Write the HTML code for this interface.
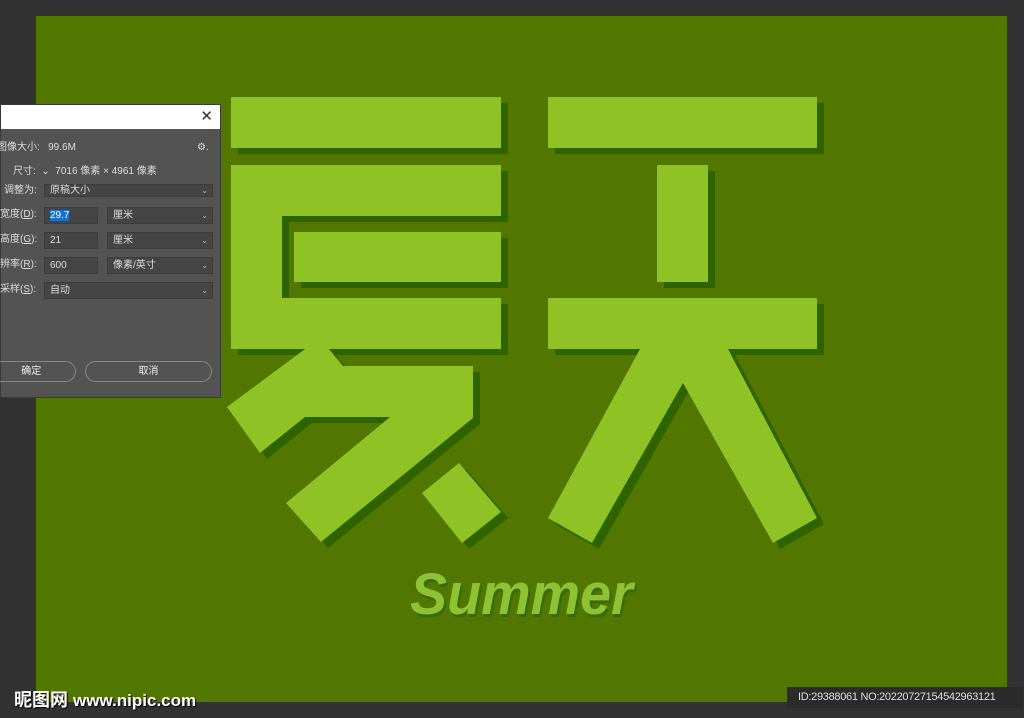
<!DOCTYPE html>
<html><head><meta charset="utf-8"><style>
*{margin:0;padding:0;box-sizing:border-box}
body{width:1024px;height:718px;background:#323232;position:relative;overflow:hidden;font-family:"Liberation Sans","Noto Sans CJK SC",sans-serif}
#canvas{position:absolute;left:36px;top:16px;width:971px;height:686px;background:#517700}
svg{position:absolute;left:0;top:0}
.summer{position:absolute;left:410px;top:566px;font:italic bold 58px/1 "Liberation Sans",sans-serif;color:#8dc232;text-shadow:2px 3px 0 #3a6a10;transform:scaleX(0.96);transform-origin:0 0;white-space:nowrap}
#dlg{position:absolute;left:0;top:104px;width:221px;height:294px;background:#535353;border:1px solid #3a3a3a;font-size:10px;color:#ddd}
#dlg .title{height:24px;background:#fff;position:relative}
#dlg .title span{position:absolute;right:7px;top:2px;color:#333;font-size:15px}
.row{position:absolute;left:0;height:18px;line-height:18px;white-space:nowrap}
.box{position:absolute;height:17px;background:#454545;border:1px solid #3c3c3c;line-height:15px;padding-left:5px;color:#ddd}
.box .ar{position:absolute;right:4px;top:0;font-size:8px;color:#bbb}
.btn{position:absolute;top:256px;height:21px;border:1px solid #888;border-radius:11px;text-align:center;line-height:19px;color:#eee}
.wm{position:absolute;left:14px;top:686px;color:#fff;font-weight:bold;font-size:18px;text-shadow:1px 1px 1px #000}
.id{position:absolute;left:787px;top:687px;width:236px;height:21px;background:#2b2b2b;color:#ddd;font-size:11px;line-height:21px;padding-left:11px;letter-spacing:-0.3px}
</style></head><body>
<div id="canvas"></div>
<svg width="1024" height="718">
<g fill="#2f6300" transform="translate(7,6)">
<rect x="231" y="97" width="270" height="51"/>
<path d="M231 165H501V216H282V298H501V349H231Z"/>
<rect x="294" y="232" width="207" height="50"/>
<polygon points="305,349 329,349 343,366 473,366 473,418 321,542 286,503 390,417 305,417 260,453 227,407"/>
<polygon points="422,493 459,463 501,512 462,543"/>
<rect x="548" y="97" width="269" height="51"/>
<rect x="657" y="165" width="51" height="117"/>
<rect x="548" y="298" width="269" height="51"/>
<polygon points="640,349 728,349 817,518 773,543 683,383 592,543 548,518"/>
</g>
<g fill="#8fc224">
<rect x="231" y="97" width="270" height="51"/>
<path d="M231 165H501V216H282V298H501V349H231Z"/>
<rect x="294" y="232" width="207" height="50"/>
<polygon points="305,349 329,349 343,366 473,366 473,418 321,542 286,503 390,417 305,417 260,453 227,407"/>
<polygon points="422,493 459,463 501,512 462,543"/>
<rect x="548" y="97" width="269" height="51"/>
<rect x="657" y="165" width="51" height="117"/>
<rect x="548" y="298" width="269" height="51"/>
<polygon points="640,349 728,349 817,518 773,543 683,383 592,543 548,518"/>
</g>
</svg>
<div class="summer">Summer</div>
<div id="dlg">
<div class="title"><span>✕</span></div>
<div class="row" style="top:34px;left:-4px">图像大小:&nbsp;&nbsp;&nbsp;99.6M</div>
<div class="row" style="top:34px;left:196px">⚙.</div>
<div class="row" style="top:58px;left:12px">尺寸:&nbsp;&nbsp;⌄&nbsp;&nbsp;7016 像素 × 4961 像素</div>
<div class="row" style="top:77px;left:3px">调整为:</div>
<div class="box" style="top:79px;left:43px;width:169px;height:13px;line-height:11px">原稿大小<span class="ar">⌄</span></div>
<div class="row" style="top:101px;left:-1px">宽度(<u>D</u>):</div>
<div class="box" style="top:102px;left:43px;width:54px"><span style="background:#1a6fc8;color:#fff">29.7</span></div>
<div class="box" style="top:102px;left:106px;width:106px">厘米<span class="ar">⌄</span></div>
<div class="row" style="top:126px;left:-1px">高度(<u>G</u>):</div>
<div class="box" style="top:127px;left:43px;width:54px">21</div>
<div class="box" style="top:127px;left:106px;width:106px">厘米<span class="ar">⌄</span></div>
<div class="row" style="top:151px;left:-1px">辨率(<u>R</u>):</div>
<div class="box" style="top:152px;left:43px;width:54px">600</div>
<div class="box" style="top:152px;left:106px;width:106px">像素/英寸<span class="ar">⌄</span></div>
<div class="row" style="top:176px;left:-1px">采样(<u>S</u>):</div>
<div class="box" style="top:177px;left:43px;width:169px">自动<span class="ar">⌄</span></div>
<div class="btn" style="left:-20px;width:95px">&nbsp;&nbsp;确定</div>
<div class="btn" style="left:84px;width:127px">取消</div>
</div>
<div class="wm">昵图网 <span style="font-size:17px">www.nipic.com</span></div>
<div class="id">ID:29388061 NO:20220727154542963121</div>
</body></html>
